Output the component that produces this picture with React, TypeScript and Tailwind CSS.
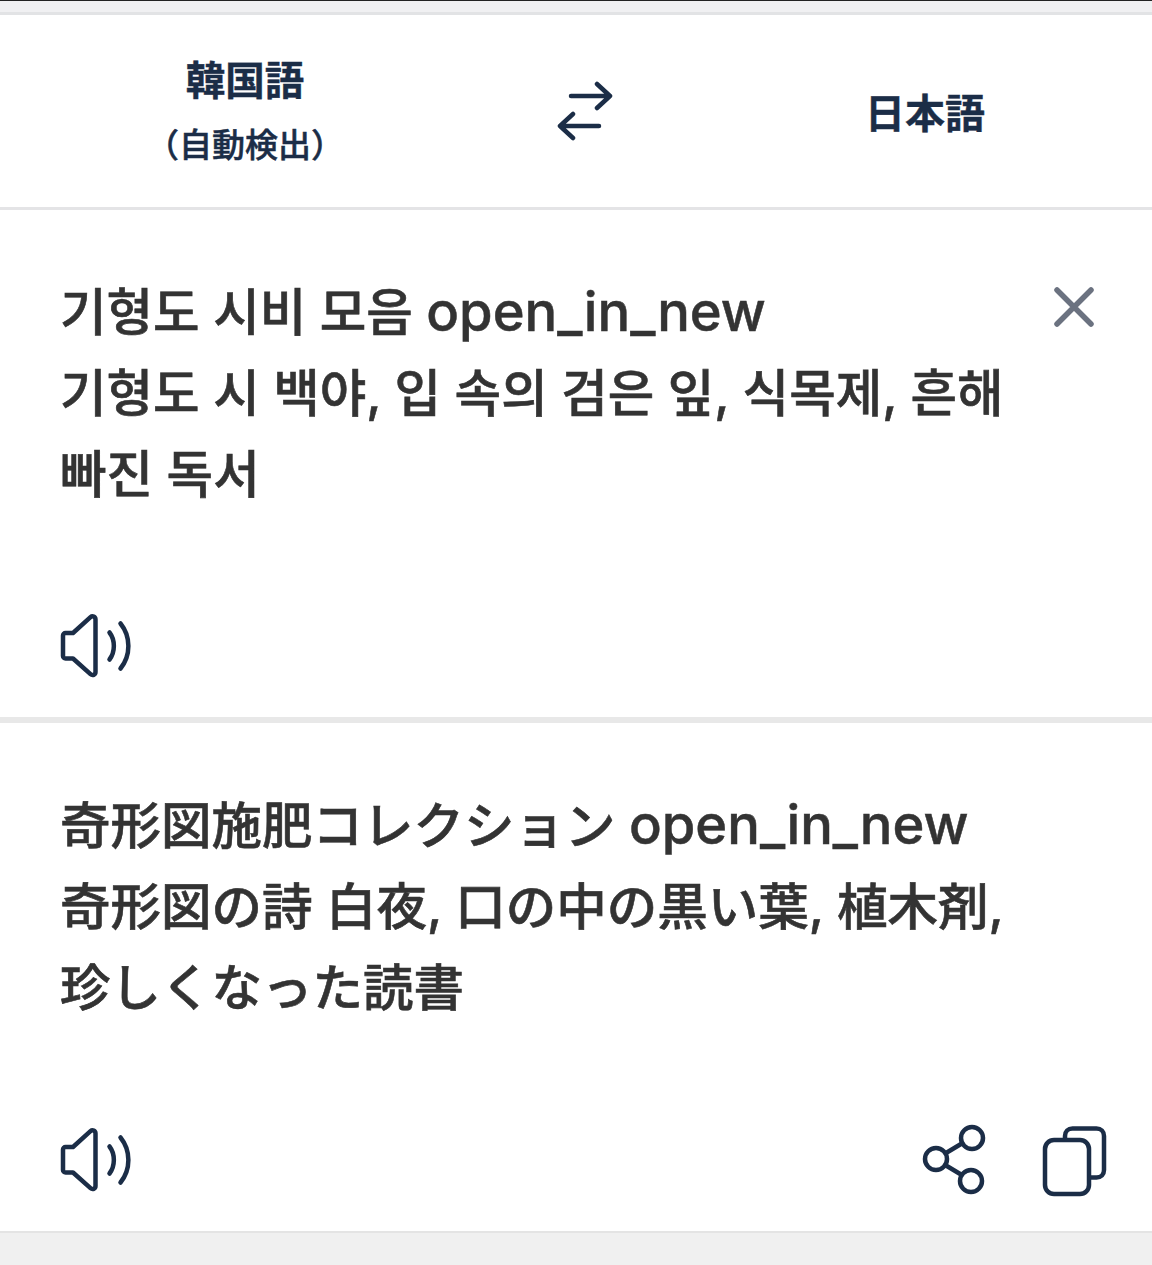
const sans = "font-['Inter','Noto_Sans_CJK_KR','Noto_Sans_CJK_JP',sans-serif]"

function SpeakerIcon() {
  return (
    <svg width="72" height="64" viewBox="0 0 72 64" fill="none" stroke="#1b2d47" strokeWidth="4.500" strokeLinecap="round" strokeLinejoin="round">
      <path d="M3 21.500c0-1.400 1.100-2.500 2.500-2.500h7.500L30.500 3.200c2-1.800 5-.6 5 2.200v52.600c0 2.800-3 4-5 2.200L13 44.500H5.500c-1.400 0-2.500-1.100-2.500-2.500z" />
      <path d="M49.500 18.500c5.800 7.500 5.800 19.500 0 27" />
      <path d="M60.500 9.500c10.500 13 10.500 32 0 45" />
    </svg>
  )
}

function ShareIcon() {
  return (
    <svg className="mb-[2px]" width="64" height="72" viewBox="0 0 64 72" fill="none" stroke="#1b2d47" strokeWidth="4.500" strokeLinecap="round">
      <circle cx="50" cy="15" r="11" />
      <circle cx="14" cy="36" r="11" />
      <circle cx="49" cy="58" r="11" />
      <path d="M24 30l15-9M24 42.500l15 9" />
    </svg>
  )
}

function CopyIcon() {
  return (
    <svg className="mt-[2px]" width="66" height="72" viewBox="0 0 66 72" fill="none" stroke="#1b2d47" strokeWidth="4.500" strokeLinejoin="round">
      <path d="M23 14v-3c0-4.500 3-7.500 7.500-7.500h24c4.500 0 7.500 3 7.500 7.500v34c0 4.500-3 7.500-7.500 7.500H48" />
      <rect x="3" y="15" width="44" height="54" rx="9" fill="white" />
    </svg>
  )
}

function SwapIcon() {
  return (
    <svg width="56" height="62" viewBox="0 0 56 62" fill="none" stroke="#1b2d47" strokeWidth="4.500" strokeLinecap="round" strokeLinejoin="round">
      <path d="M14 16h39M40 4l13 12-13 12" />
      <path d="M42 46H3M16 34L3 46l13 12" />
    </svg>
  )
}

function CloseIcon() {
  return (
    <svg width="42" height="42" viewBox="0 0 42 42" fill="none" stroke="#6b7280" strokeWidth="5.500" strokeLinecap="round">
      <path d="M4 4l34 34M38 4L4 38" />
    </svg>
  )
}

export default function App() {
  return (
    <div className={`${sans} min-h-[1265px] bg-[#f0f0f0] flex flex-col`}>
      <div className="h-[15px] bg-[#f0f0f2] border-t border-t-[#222222] border-b-[3px] border-b-[#e2e3e5]" />

      <div className="h-[192px] bg-white grid grid-cols-[490px_190px_1fr] items-center text-[#1b2d47]">
        <div className="flex flex-col items-center pt-[4px]">
          <span className="text-[39.500px] leading-[48px] font-bold [-webkit-text-stroke:0.4px_#1b2d47]">韓国語</span>
          <span className="text-[33px] leading-[48px] mt-[16px] font-medium [-webkit-text-stroke:0.5px_#1b2d47]">（自動検出）</span>
        </div>
        <div className="flex justify-center">
          <SwapIcon />
        </div>
        <div className="text-center text-[40px] font-bold leading-[48px] pl-[18px] pt-[6px] [-webkit-text-stroke:0.4px_#1b2d47]">日本語</div>
      </div>

      <div className="h-[510px] border-t-[3px] border-t-[#e4e4e6] bg-white px-[60px] pt-[62px] flex flex-col text-[#333333]">
        <div className="flex justify-between">
          <p className="w-[960px] text-[50.600px] leading-[81px] font-medium [-webkit-text-stroke:0.6px_#333333]">
            기형도 시비 모음 <span className="text-[54.300px] leading-none [-webkit-text-stroke:0.5px_#333333]">open_in_new</span>
            <br />
            기형도 시 백야, 입 속의 검은 잎, 식목제, 흔해
            <br />
            빠진 독서
          </p>
          <div className="mr-[-3px] mt-[14px]"><CloseIcon /></div>
        </div>
        <div className="mt-[99px]">
          <SpeakerIcon />
        </div>
      </div>

      <div className="h-[514px] border-t-[6px] border-t-[#e8e8e8] bg-white px-[60px] pt-[62px] flex flex-col text-[#333333]">
        <p className="w-[980px] text-[50.500px] leading-[81px] font-medium [-webkit-text-stroke:0.6px_#333333]">
          奇形図施肥コレクション <span className="text-[54.300px] leading-none [-webkit-text-stroke:0.5px_#333333]">open_in_new</span>
          <br />
          奇形図の詩 白夜, 口の中の黒い葉, 植木剤,
          <br />
          珍しくなった読書
        </p>
        <div className="mt-[95px] flex items-center justify-between">
          <SpeakerIcon />
          <div className="flex items-center gap-[56px] mr-[-16px]">
            <ShareIcon />
            <CopyIcon />
          </div>
        </div>
      </div>

      <div className="flex-1 border-t-[2px] border-t-[#e4e4e4] bg-[#f0f0f0]" />
    </div>
  )
}
